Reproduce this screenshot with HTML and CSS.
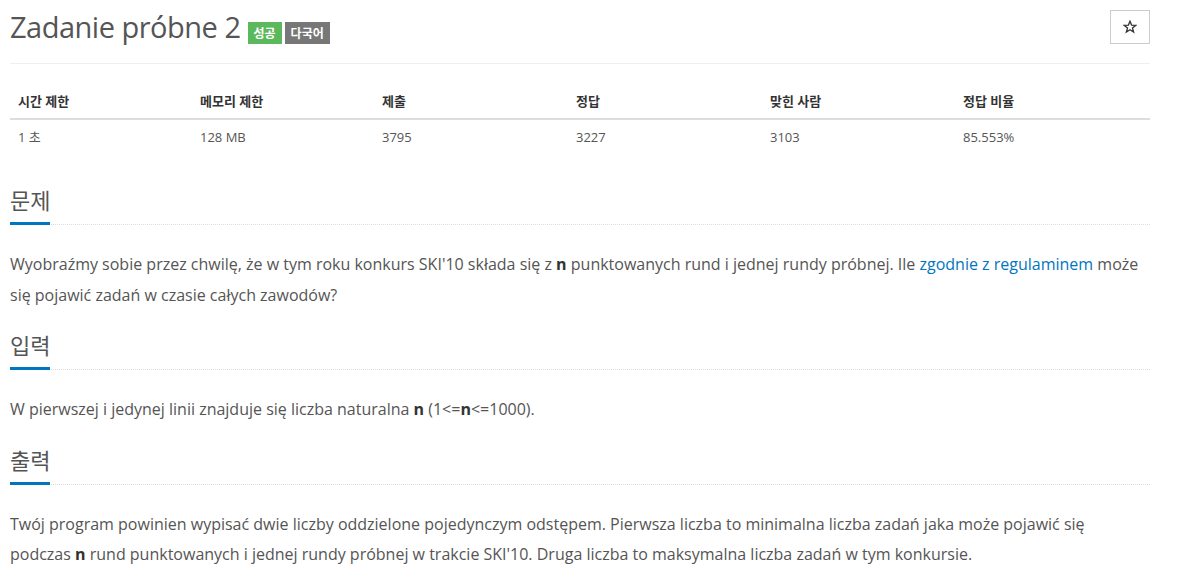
FILE: index.html
```html
<!DOCTYPE html>
<html lang="pl">
<head>
<meta charset="utf-8">
<title>Zadanie próbne 2</title>
<link rel="stylesheet" href="styles.css">
</head>
<body>
<div class="container">
  <div class="page-header">
    <h1 class="title">Zadanie próbne 2 <span class="label label-success">성공</span><span class="label label-default">다국어</span></h1>
    <button class="star-btn" type="button" aria-label="즐겨찾기"><svg class="star-icon" viewBox="0 0 14 14" width="14" height="14"><path d="M7 1.2 L8.6 5.1 L12.8 5.3 L9.5 7.9 L10.6 12 L7 9.7 L3.4 12 L4.5 7.9 L1.2 5.3 L5.4 5.1 Z" fill="none" stroke="#333" stroke-width="1.3" stroke-linejoin="miter"/></svg></button>
  </div>
  <table class="info">
    <thead>
      <tr><th class="c1">시간 제한</th><th class="c2">메모리 제한</th><th class="c3">제출</th><th class="c4">정답</th><th class="c5">맞힌 사람</th><th class="c6">정답 비율</th></tr>
    </thead>
    <tbody>
      <tr><td>1 초</td><td>128 MB</td><td>3795</td><td>3227</td><td>3103</td><td>85.553%</td></tr>
    </tbody>
  </table>

  <section class="problem-section">
    <div class="headline"><h2>문제</h2></div>
    <p class="text">Wyobraźmy sobie przez chwilę, że w tym roku konkurs SKI'10 składa się z <b>n</b> punktowanych rund i jednej rundy próbnej. Ile <a href="#">zgodnie z regulaminem</a> może się pojawić zadań w czasie całych zawodów?</p>
  </section>

  <section class="problem-section">
    <div class="headline"><h2>입력</h2></div>
    <p class="text">W pierwszej i jedynej linii znajduje się liczba naturalna <b>n</b> (1&lt;=<b>n</b>&lt;=1000).</p>
  </section>

  <section class="problem-section">
    <div class="headline"><h2>출력</h2></div>
    <p class="text">Twój program powinien wypisać dwie liczby oddzielone pojedynczym odstępem. Pierwsza liczba to minimalna liczba zadań jaka może pojawić się podczas <b>n</b> rund punktowanych i jednej rundy próbnej w trakcie SKI'10. Druga liczba to maksymalna liczba zadań w tym konkursie.</p>
  </section>
</div>
</body>
</html>
```

FILE: styles.css
```css
html, body {
  margin: 0;
  padding: 0;
  background: #fff;
}
body {
  font-family: "Open Sans", "Noto Sans CJK KR", sans-serif;
  color: #555;
  font-size: 13px;
}
.container {
  width: 1140px;
  margin-left: 10px;
}
.page-header {
  display: flex;
  justify-content: space-between;
  align-items: flex-start;
  border-bottom: 1px solid #eee;
  padding-top: 7px;
  height: 56px;
  box-sizing: content-box;
}
.title {
  margin: 0;
  font-size: 29px;
  letter-spacing: -0.5px;
  font-weight: 400;
  line-height: 40px;
  color: #555;
}
.label {
  display: inline-block;
  font-family: "Noto Sans CJK KR", sans-serif;
  font-size: 12px;
  letter-spacing: 0;
  font-weight: 700;
  color: #fff;
  padding: 0 6px;
  line-height: 22px;
  vertical-align: baseline;
  margin-left: 3px;
}
.label-success { background: #5cb85c; margin-left: 0; }
.label-default { background: #777; }
.star-btn {
  width: 40px;
  height: 34px;
  margin: 3px 0 0 0;
  border: 1px solid #ccc;
  background: #fff;
  padding: 0;
  display: flex;
  align-items: center;
  justify-content: center;
}
.star-icon {
  display: block;
  margin-top: -1px;
}
.info {
  width: 100%;
  border-collapse: collapse;
  margin-top: 20px;
  margin-bottom: 29px;
}
.info th, .info td {
  text-align: left;
  padding: 8px;
  line-height: 18px;
}
.info th {
  font-weight: 700;
  border-bottom: 2px solid #ddd;
  color: #333;
}
.info td { color: #555; }
.c1 { width: 166px; }
.c2 { width: 166px; }
.c3 { width: 178px; }
.c4 { width: 178px; }
.c5 { width: 177px; }
.problem-section + .problem-section {
  margin-top: 18px;
}
.headline {
  border-bottom: 1px dotted #ddd;
  margin: 0 0 24px 0;
}
.headline h2 {
  display: inline-block;
  vertical-align: top;
  margin: 0 0 -1px 0;
  font-size: 22px;
  font-weight: 400;
  line-height: 34px;
  padding-bottom: 5px;
  border-bottom: 3px solid #0076c0;
  color: #555;
}
.text {
  margin: 0;
  max-width: 1132px;
  font-size: 16px;
  line-height: 30.6px;
  color: #555;
}
.text a {
  color: #0076c0;
  text-decoration: none;
}
.text b { font-weight: 700; color: #333; }
```
